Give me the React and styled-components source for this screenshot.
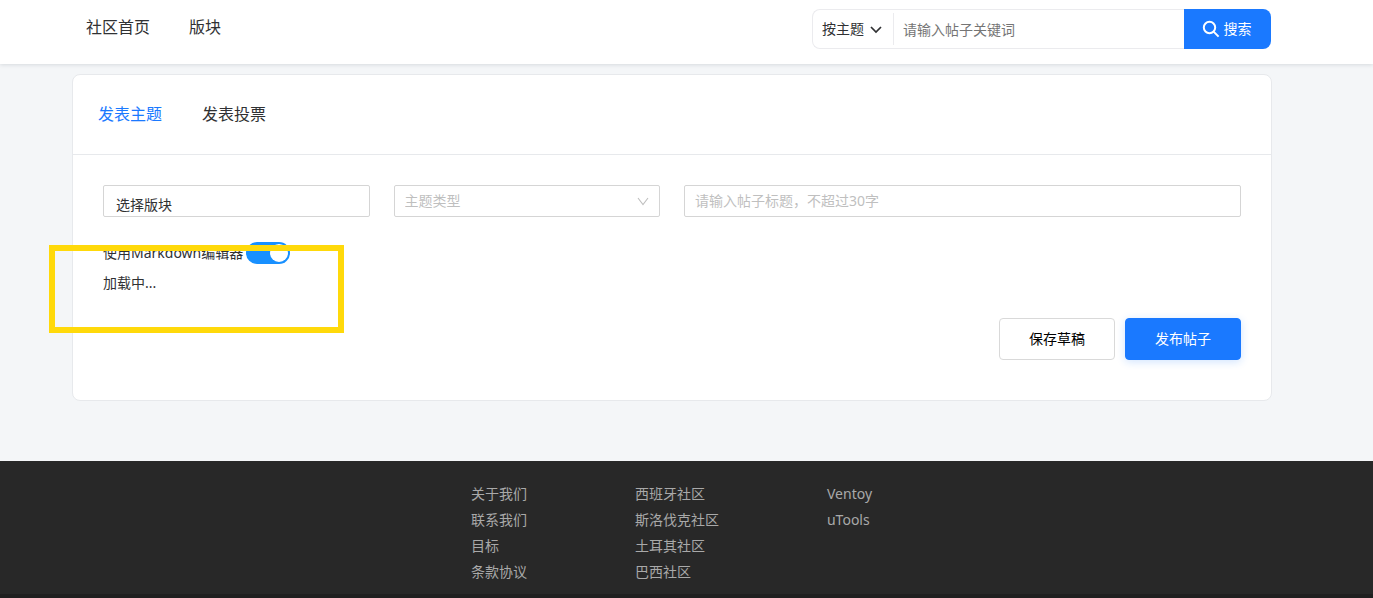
import React from "react";
import styled, { createGlobalStyle, css } from "styled-components";

const GlobalStyle = createGlobalStyle`
  *, *::before, *::after { box-sizing: border-box; }
  body {
    margin: 0;
    background: #f4f6f8;
    color: #303133;
    font: 14px/22px "Noto Sans", "Noto Sans CJK SC", sans-serif;
  }
  button, input, select { font: inherit; color: inherit; margin: 0; }
  a { color: inherit; text-decoration: none; }
`;

const Page = styled.div`
  min-height: 100vh;
  display: flex;
  flex-direction: column;
`;

const gutters = css`
  padding-left: 72px;
  padding-right: 101px;
`;

const Header = styled.header`
  ${gutters}
  padding-right: 102px;
  position: relative;
  display: flex;
  justify-content: space-between;
  align-items: flex-start;
  height: 64px;
  background: #fff;
  box-shadow: 0 1px 4px rgba(0, 21, 41, 0.12);
`;

const Nav = styled.nav`
  display: flex;
  gap: 39px;
  padding: 15px 14px;
`;

const NavLink = styled.a`
  font-size: 16px;
  line-height: 24px;
`;

const SearchForm = styled.form`
  display: flex;
  width: 459px;
  height: 40px;
  margin-top: 9px;
`;

const SearchFields = styled.div`
  flex: 1;
  min-width: 0;
  display: flex;
  align-items: center;
  border: 1px solid #ebebee;
  border-right: 0;
  border-radius: 8px 0 0 8px;
`;

const SelectWrap = styled.div`
  position: relative;
  display: flex;
  align-items: center;
`;

const SelectIcon = styled.svg`
  position: absolute;
  right: 11px;
  pointer-events: none;
  fill: none;
`;

const SearchScope = styled.select`
  appearance: none;
  width: 81px;
  height: 32px;
  padding: 0 0 0 9px;
  border: 0;
  border-right: 1px solid #ebebee;
  background: transparent;
  outline: none;
`;

const SearchInput = styled.input`
  flex: 1;
  min-width: 0;
  height: 36px;
  padding: 0 9px;
  border: 0;
  background: transparent;
  outline: none;
  &::placeholder { color: #757575; opacity: 1; }
`;

const SearchButton = styled.button`
  display: flex;
  align-items: center;
  justify-content: center;
  gap: 4px;
  width: 87px;
  padding: 0 2px 0 0;
  border: 0;
  border-radius: 0 8px 8px 0;
  background: #1a79ff;
  color: #fff;
`;

const Main = styled.main`
  ${gutters}
  padding-top: 10px;
  padding-bottom: 60px;
`;

const Card = styled.section`
  border: 1px solid #e7e9ec;
  border-radius: 8px;
  background: #fff;
`;

const Tabs = styled.nav`
  display: flex;
  gap: 40px;
  padding: 27px 25px 28px;
  border-bottom: 1px solid #e7e9ec;
`;

const Tab = styled.button`
  padding: 0;
  border: 0;
  background: none;
  font-size: 16px;
  line-height: 24px;
  color: ${(p) => (p.$active ? "#1a79ff" : "#303133")};
`;

const Body = styled.form`
  padding: 30px 30px 40px;
`;

const FieldRow = styled.div`
  display: grid;
  grid-template-columns: repeat(4, minmax(0, 1fr));
  gap: 24px;
`;

const fieldBox = css`
  width: 100%;
  height: 32px;
  border: 1px solid #d5d5d5;
  border-radius: 2px;
  background: #fff;
  outline: none;
`;

const BoardPicker = styled.button`
  ${fieldBox}
  padding: 8px 12px 0;
  text-align: left;
`;

const TypeSelect = styled.select`
  ${fieldBox}
  appearance: none;
  padding: 0 10px;
  color: #bfbfbf;
`;

const TitleInput = styled.input`
  ${fieldBox}
  grid-column: span 2;
  padding: 0 10px 2px;
  &::placeholder { color: #bfbfbf; opacity: 1; }
`;

const Editor = styled.div`
  position: relative;
  padding-top: 25px;
`;

const SwitchLabel = styled.label`
  display: flex;
  align-items: center;
  gap: 3px;
  width: max-content;
  line-height: 20px;
`;

const Switch = styled.input`
  appearance: none;
  display: flex;
  align-items: center;
  width: 44px;
  height: 22px;
  padding: 2px;
  border-radius: 11px;
  background: #bfbfbf;
  &::before {
    content: "";
    width: 18px;
    height: 18px;
    border-radius: 50%;
    background: #fff;
  }
  &:checked { background: #1890ff; justify-content: flex-end; }
`;

const Loading = styled.p`
  margin: 8px 0 0;
`;

const Highlight = styled.div`
  position: absolute;
  top: 28px;
  left: -54px;
  width: 295px;
  height: 88px;
  border: 6px solid #ffd90a;
  pointer-events: none;
`;

const Actions = styled.div`
  display: flex;
  justify-content: flex-end;
  gap: 10px;
  margin-top: 24px;
`;

const ActionButton = styled.button`
  width: 116px;
  height: 42px;
  padding: 0;
  border: 1px solid ${(p) => (p.$primary ? "#1a79ff" : "#d9d9d9")};
  border-radius: 4px;
  background: ${(p) => (p.$primary ? "#1a79ff" : "#fff")};
  color: ${(p) => (p.$primary ? "#fff" : "#000")};
  box-shadow: ${(p) => (p.$primary ? "0 2px 8px rgba(26, 121, 255, 0.2)" : "none")};
`;

const Footer = styled.footer`
  flex: 1;
  background: #282828;
  color: #a9a9a9;
`;

const FooterColumns = styled.div`
  ${gutters}
  padding-right: 102px;
  display: flex;
  justify-content: center;
  gap: 108px;
  padding-top: 20px;
  padding-bottom: 9px;
`;

const FooterList = styled.ul`
  margin: 0;
  padding: 0;
  list-style: none;
  line-height: 26px;
`;

const FooterBar = styled.div`
  height: 4px;
  background: #202020;
`;

const footerLinks = [
  ["关于我们", "联系我们", "目标", "条款协议"],
  ["西班牙社区", "斯洛伐克社区", "土耳其社区", "巴西社区"],
  ["Ventoy", "uTools"],
];

export default function App() {
  return (
    <Page>
      <GlobalStyle />
      <Header>
        <Nav>
          <NavLink href="#home">社区首页</NavLink>
          <NavLink href="#boards">版块</NavLink>
        </Nav>
        <SearchForm onSubmit={(e) => e.preventDefault()}>
          <SearchFields>
            <SelectWrap>
              <SearchScope aria-label="搜索范围">
                <option>按主题</option>
              </SearchScope>
              <SelectIcon width="14" height="14" viewBox="0 0 14 14" stroke="#303133" strokeWidth="1.7">
                <path d="M2 5l5 5 5-5" />
              </SelectIcon>
            </SelectWrap>
            <SearchInput aria-label="关键词" placeholder="请输入帖子关键词" />
          </SearchFields>
          <SearchButton type="submit">
            <svg width="18" height="18" viewBox="0 0 18 18" fill="none" stroke="#fff" strokeWidth="2">
              <circle cx="7.5" cy="7.5" r="5.7" />
              <path d="M11.6 11.6l5 5" />
            </svg>
            搜索
          </SearchButton>
        </SearchForm>
      </Header>
      <Main>
        <Card>
          <Tabs>
            <Tab type="button" $active>发表主题</Tab>
            <Tab type="button">发表投票</Tab>
          </Tabs>
          <Body onSubmit={(e) => e.preventDefault()}>
            <FieldRow>
              <BoardPicker type="button">选择版块</BoardPicker>
              <SelectWrap>
                <TypeSelect aria-label="主题类型">
                  <option>主题类型</option>
                </TypeSelect>
                <SelectIcon width="12" height="12" viewBox="0 0 12 12" stroke="#bfbfbf" strokeWidth="1.1">
                  <path d="M1 3l5 6.500 5-6.500" />
                </SelectIcon>
              </SelectWrap>
              <TitleInput aria-label="帖子标题" placeholder="请输入帖子标题，不超过30字" />
            </FieldRow>
            <Editor>
              <SwitchLabel>
                使用Markdown编辑器
                <Switch type="checkbox" role="switch" defaultChecked />
              </SwitchLabel>
              <Loading>加载中...</Loading>
              <Highlight />
            </Editor>
            <Actions>
              <ActionButton type="button">保存草稿</ActionButton>
              <ActionButton type="submit" $primary>发布帖子</ActionButton>
            </Actions>
          </Body>
        </Card>
      </Main>
      <Footer>
        <FooterColumns>
          {footerLinks.map((links) => (
            <FooterList key={links[0]}>
              {links.map((label) => (
                <li key={label}><a href="#footer">{label}</a></li>
              ))}
            </FooterList>
          ))}
        </FooterColumns>
        <FooterBar />
      </Footer>
    </Page>
  );
}
